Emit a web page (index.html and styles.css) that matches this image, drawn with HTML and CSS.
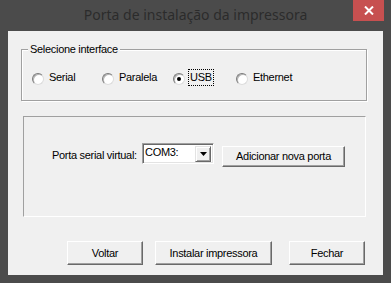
FILE: index.html
```html
<!DOCTYPE html>
<html lang="pt">
<head>
<meta charset="utf-8">
<title>Porta de instalação da impressora</title>
<link rel="stylesheet" href="styles.css">
</head>
<body>
<div class="window">
  <div class="titlebar">
    <span class="tb-spacer"></span>
    <div class="title">Porta de instalação da impressora</div>
    <div class="close-wrap">
      <div class="close">
        <svg width="10" height="9" viewBox="0 0 10 9"><path d="M1 0.5 L9 8.5 M9 0.5 L1 8.5" stroke="#fff" stroke-width="2" fill="none"/></svg>
      </div>
    </div>
  </div>
  <div class="client">
    <div class="group">
      <span class="legend">Selecione interface</span>
      <div class="radios">
        <div class="radio"><span class="circle"></span><span class="rlabel">Serial</span></div>
        <div class="radio"><span class="circle"></span><span class="rlabel">Paralela</span></div>
        <div class="radio"><span class="circle checked"></span><span class="rlabel focus">USB</span></div>
        <div class="radio"><span class="circle"></span><span class="rlabel">Ethernet</span></div>
      </div>
    </div>
    <div class="panel">
      <div class="row">
        <span class="label">Porta serial virtual:</span>
        <div class="combo">
          <span class="value">COM3:</span>
          <span class="drop"><svg width="7" height="4" viewBox="0 0 7 4"><path d="M0 0 H7 L3.5 4 Z" fill="#000"/></svg></span>
        </div>
        <button class="btn btn-add">Adicionar nova porta</button>
      </div>
    </div>
    <div class="actions">
      <button class="btn btn-back">Voltar</button>
      <button class="btn btn-install">Instalar impressora</button>
      <button class="btn btn-close">Fechar</button>
    </div>
  </div>
</div>
</body>
</html>
```

FILE: styles.css
```css
* { box-sizing: border-box; }
html, body { margin: 0; padding: 0; }
body {
  width: 391px;
  height: 283px;
  overflow: hidden;
  font-family: "Liberation Sans", Arial, sans-serif;
  font-size: 11px;
  letter-spacing: -0.3px;
  color: #000;
}
.window {
  width: 391px;
  height: 283px;
  background: #4b4b4b;
  padding: 0 8px 8px 8px;
}
.titlebar {
  height: 31px;
  display: grid;
  grid-template-columns: 1fr auto 1fr;
  align-items: start;
}
.title {
  margin-top: 5px;
  font-family: "Noto Sans", "Open Sans", sans-serif;
  font-size: 14px;
  line-height: 20px;
  letter-spacing: 0;
  color: #2b2b2b;
  white-space: nowrap;
}
.close-wrap {
  display: flex;
  justify-content: flex-end;
  margin-right: -1px;
}
.close {
  width: 31px;
  height: 21px;
  background: #c75050;
  display: flex;
  align-items: center;
  justify-content: center;
}
.close svg { display: block; }
.client {
  background: #f0f0f0;
  height: 244px;
  padding-top: 18px;
}
.group {
  position: relative;
  margin-left: 13px;
  width: 346px;
  height: 52px;
  border: 1px solid #a0a0a0;
  box-shadow: 1px 1px 0 #fff, inset 1px 1px 0 #fff;
}
.legend {
  position: absolute;
  top: -7px;
  left: 6px;
  padding: 0 2px;
  background: #f0f0f0;
  line-height: 13px;
}
.radios {
  display: grid;
  grid-template-columns: 70px 71px 63px auto;
  padding: 19px 0 0 10px;
}
.radio {
  display: flex;
  align-items: flex-start;
}
.circle {
  width: 12px;
  height: 12px;
  margin-top: 4px;
  margin-right: 3px;
  border-radius: 50%;
  background: #fff;
  border: 1px solid;
  border-color: #7a7a7a #dcdcdc #dcdcdc #7a7a7a;
  box-shadow: inset 1px 1px 0 #b4b4b4;
  display: flex;
  align-items: center;
  justify-content: center;
}
.circle.checked::after {
  content: "";
  width: 4px;
  height: 4px;
  border-radius: 50%;
  background: #000;
}
.rlabel {
  line-height: 13px;
  padding: 1px;
  border: 1px dotted transparent;
}
.rlabel.focus { border-color: #000; }
.panel {
  margin: 15px 0 0 15px;
  width: 343px;
  height: 101px;
  border: 1px solid;
  border-color: #a0a0a0 #fff #fff #a0a0a0;
}
.row {
  display: flex;
  align-items: flex-start;
  padding: 26px 0 0 28px;
}
.label {
  width: 90px;
  margin-top: 6px;
  line-height: 13px;
  white-space: nowrap;
}
.combo {
  width: 72px;
  height: 21px;
  background: #fff;
  border: 1px solid;
  border-color: #a0a0a0 #fff #fff #a0a0a0;
  box-shadow: inset 1px 1px 0 #696969, inset -1px -1px 0 #e3e3e3;
  padding: 1px;
  display: flex;
  align-items: flex-start;
}
.value {
  flex: 1;
  margin: 1px 0 0 1px;
  line-height: 13px;
}
.drop {
  width: 16px;
  height: 16px;
  margin-top: 1px;
  margin-right: 1px;
  background: #f0f0f0;
  border: 1px solid;
  border-color: #e3e3e3 #696969 #696969 #e3e3e3;
  box-shadow: inset 1px 1px 0 #fff, inset -1px -1px 0 #a0a0a0;
  display: flex;
  align-items: center;
  justify-content: center;
}
.drop svg { display: block; margin-left: 1px; }
.btn {
  font-family: "Liberation Sans", Arial, sans-serif;
  font-size: 11px;
  letter-spacing: -0.3px;
  color: #000;
  background: #f0f0f0;
  border: 1px solid;
  border-color: #fff #696969 #696969 #fff;
  box-shadow: inset -1px -1px 0 #a0a0a0;
  padding: 0;
  line-height: 13px;
  margin: 0;
}
.btn-add {
  width: 123px;
  height: 21px;
  margin-left: 8px;
  margin-top: 3px;
}
.actions {
  display: flex;
  margin-top: 24px;
  padding-left: 59px;
}
.actions .btn { height: 24px; }
.btn-back { width: 76px; }
.btn-install { width: 117px; margin-left: 12px; }
.btn-close { width: 76px; margin-left: 17px; }
```
